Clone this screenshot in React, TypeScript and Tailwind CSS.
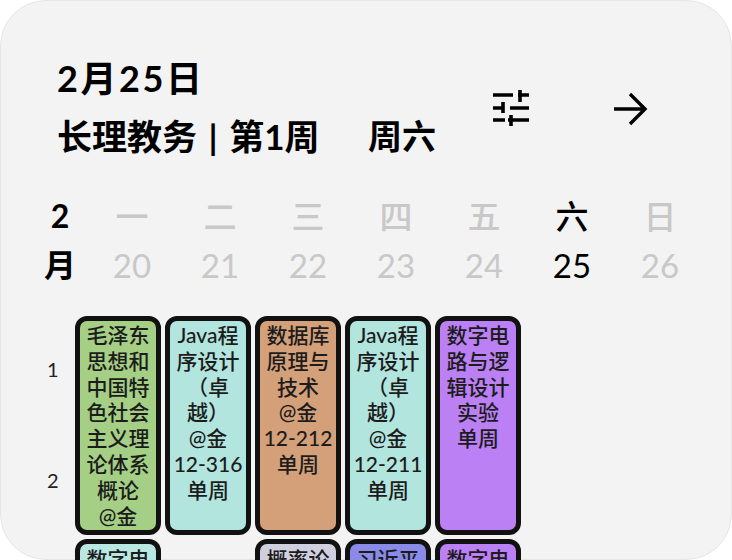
const cjk = "font-['Lato','Noto_Sans_CJK_SC',sans-serif]";

const days = [
  { name: "一", date: "20" },
  { name: "二", date: "21" },
  { name: "三", date: "22" },
  { name: "四", date: "23" },
  { name: "五", date: "24" },
  { name: "六", date: "25", active: true },
  { name: "日", date: "26" },
];

const firstRow = [
  { color: "bg-[#a5cf85]", lines: ["毛泽东", "思想和", "中国特", "色社会", "主义理", "论体系", "概论", "@金"] },
  { color: "bg-[#b3e5df]", lines: ["Java程", "序设计", "（卓", "越）", "@金", "12-316", "单周"] },
  { color: "bg-[#d4a07a]", lines: ["数据库", "原理与", "技术", "@金", "12-212", "单周"] },
  { color: "bg-[#b3e5df]", lines: ["Java程", "序设计", "（卓", "越）", "@金", "12-211", "单周"] },
  { color: "bg-[#bb80f4]", lines: ["数字电", "路与逻", "辑设计", "实验", "单周"] },
];

const secondRow = [
  { color: "bg-[#b9e8e2]", text: "数字电" },
  null,
  { color: "bg-[#cfcfe0]", text: "概率论" },
  { color: "bg-[#8a8ae8]", text: "习近平" },
  { color: "bg-[#bb80f4]", text: "数字电" },
];

export default function App() {
  return (
    <div className={`h-[560px] w-[732px] overflow-hidden bg-white ${cjk}`}>
      <div className="h-full rounded-[46px] border border-[#e6e6e6] bg-[#f3f3f3]">
        <div className="flex items-start pl-[56px] pt-[52px]">
          <div className="w-[436px] font-bold text-black">
            <div className="text-[36px] leading-[50px] tracking-[2.6px]">2月25日</div>
            <div className="mt-[10px] flex text-[35px] leading-[46px]">
              <span className="w-[311px] whitespace-nowrap [word-spacing:3px]">长理教务 | 第1周</span>
              <span className="text-[34px]">周六</span>
            </div>
          </div>
          <svg width="36" height="36" viewBox="0 0 36 36" className="mt-[37px]" fill="none" stroke="black" strokeWidth="3.6">
            <path d="M0 5h20M25 5h11M27 0v12M0 18h11M17 18h19M10 12v11M0 30h12M15 30h21M18 25v11" />
          </svg>
          <svg width="36" height="36" viewBox="0 0 36 36" className="ml-[84px] mt-[38px]" fill="none" stroke="black" strokeWidth="3.4">
            <path d="M1 18h31M17 3l15 15-15 15" />
          </svg>
        </div>

        <div className="mt-[33px] flex pl-[39px]">
          <div className="w-[40px] text-center text-[32px] font-bold leading-[48px] text-black">
            <div>2</div>
            <div className="leading-[50px]">月</div>
          </div>
          <div className="flex pl-[8px]">
            {days.map((day) => (
              <div key={day.date} className={`w-[88px] text-center text-[33px] leading-[48px] ${day.active ? "text-black" : "text-[#c8c8c8]"}`}>
                <div className="font-medium">{day.name}</div>
                <div className="leading-[50px]">{day.date}</div>
              </div>
            ))}
          </div>
        </div>

        <div className="mt-[26px] flex">
          <div className="w-[74px] pl-[46px] text-[20px] text-[#222]">
            <div className="mt-[38px] leading-[30px]">1</div>
            <div className="mt-[81px] leading-[30px]">2</div>
          </div>
          <div>
            <div className="flex gap-[4px]">
              {firstRow.map((course, i) => (
                <div key={i} className={`h-[219px] w-[86px] overflow-hidden rounded-[12px] border-[5px] border-[#111] pt-[1px] text-center text-[21px] font-medium leading-[25.8px] text-[#1c1c1c] ${course.color}`}>
                  {course.lines.map((line, j) => (
                    <div key={j} className="whitespace-nowrap">{line}</div>
                  ))}
                </div>
              ))}
            </div>
            <div className="mt-[4px] flex gap-[4px]">
              {secondRow.map((course, i) =>
                course ? (
                  <div key={i} className={`h-[60px] w-[86px] overflow-hidden rounded-[12px] border-[5px] border-[#111] pt-[2px] text-center text-[21px] font-medium leading-[25.8px] text-[#1c1c1c] ${course.color}`}>
                    {course.text}
                  </div>
                ) : (
                  <div key={i} className="w-[86px]" />
                ),
              )}
            </div>
          </div>
        </div>
      </div>
    </div>
  );
}
